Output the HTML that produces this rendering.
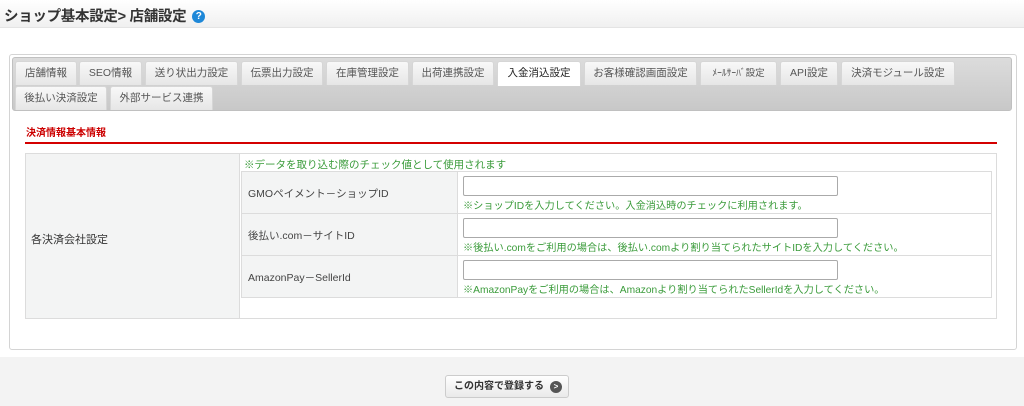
<!DOCTYPE html>
<html><head><meta charset="utf-8"><style>
*{box-sizing:border-box;margin:0;padding:0}
body{width:1024px;height:406px;background:#fff;font-family:"Liberation Sans","Noto Sans CJK JP",sans-serif;font-size:11px;color:#333;position:relative;overflow:hidden}
.hd{position:absolute;left:0;top:0;width:1024px;height:28px;background:linear-gradient(#fff,#f0f0f0);border-bottom:1px solid #e4e4e4}
.hd h1{position:absolute;left:4px;top:5px;font-size:14.5px;font-weight:bold;color:#333;letter-spacing:-0.3px}
.q{display:inline-block;width:13px;height:13px;border-radius:50%;background:#1e88d8;color:#fff;font-size:10px;text-align:center;line-height:13px;vertical-align:2px;margin-left:6px;letter-spacing:0}
.panel{position:absolute;left:9px;top:54px;width:1008px;height:296px;border:1px solid #d4d4d4;border-radius:3px;background:#fff}
.tabs{position:absolute;left:12px;top:57px;width:1000px;height:54px;background:linear-gradient(#dcdcdc,#c8c8c8);border-radius:3px;border:1px solid #c0c0c0}
.t{position:absolute;height:24px;background:linear-gradient(#f8f8f8,#e6e6e6);border:1px solid #d6d6d6;border-bottom:none;border-radius:3px 3px 0 0;font-size:10.5px;color:#555;text-align:center;line-height:23px}
.t.a{background:#fff;color:#222}
.sec{position:absolute;left:26px;top:124px;font-size:10px;font-weight:bold;color:#c00}
.red{position:absolute;left:25px;top:142px;width:972px;height:2px;background:#d40000}
.tbl{position:absolute;left:25px;top:153px;width:972px;height:166px;border:1px solid #dcdcdc}
.lc{position:absolute;left:0;top:0;width:214px;height:164px;background:#f3f4f4;border-right:1px solid #dcdcdc}
.lc span{position:absolute;left:5px;top:77px}
.note{position:absolute;left:244px;top:157px;color:#3a9b3a;font-size:10.5px}
.row{position:absolute;left:241px;width:751px;height:42px;border:1px solid #dcdcdc;border-top:none}
.row .l{position:absolute;left:0;top:0;width:216px;height:41px;background:#f3f4f4;border-right:1px solid #dcdcdc;padding:14px 0 0 6px;font-size:10.5px;color:#444}
.row input{position:absolute;left:221px;top:4px;width:375px;height:20px;border:1px solid #aaa;border-radius:2px}
.row .h{position:absolute;left:221px;top:25px;color:#3a9b3a;font-size:10.2px;white-space:nowrap}
.ft{position:absolute;left:0;top:357px;width:1024px;height:49px;background:#f3f3f3}
.btn{position:absolute;left:445px;top:375px;width:124px;height:23px;border:1px solid #ccc;border-radius:3px;background:linear-gradient(#fff,#eaeaea);font-size:10px;font-weight:bold;color:#333;line-height:21px;padding-left:8px}
.btn i{position:absolute;left:104px;top:5px;width:12px;height:12px;border-radius:50%;background:#555;color:#fff;font-style:normal;font-size:8px;line-height:12px;text-align:center}
</style></head><body>
<div class="hd"><h1>ショップ基本設定&gt; 店舗設定<span class="q">?</span></h1></div>
<div class="panel"></div>
<div class="tabs"></div>
<div class="t" style="left:15px;top:61px;width:62px">店舗情報</div>
<div class="t" style="left:79px;top:61px;width:63px">SEO情報</div>
<div class="t" style="left:145px;top:61px;width:93px">送り状出力設定</div>
<div class="t" style="left:241px;top:61px;width:82px">伝票出力設定</div>
<div class="t" style="left:326px;top:61px;width:83px">在庫管理設定</div>
<div class="t" style="left:412px;top:61px;width:82px">出荷連携設定</div>
<div class="t a" style="left:497px;top:61px;width:84px;height:25px">入金消込設定</div>
<div class="t" style="left:584px;top:61px;width:113px">お客様確認画面設定</div>
<div class="t" style="left:700px;top:61px;width:77px;font-size:9.5px">ﾒｰﾙｻｰﾊﾞ設定</div>
<div class="t" style="left:780px;top:61px;width:58px">API設定</div>
<div class="t" style="left:841px;top:61px;width:114px">決済モジュール設定</div>
<div class="t" style="left:15px;top:86px;width:92px">後払い決済設定</div>
<div class="t" style="left:110px;top:86px;width:103px">外部サービス連携</div>
<div class="sec">決済情報基本情報</div>
<div class="red"></div>
<div class="tbl"><div class="lc"><span>各決済会社設定</span></div></div>
<div class="note">※データを取り込む際のチェック値として使用されます</div>
<div class="row" style="top:171px;border-top:1px solid #dcdcdc;height:43px"><div class="l">GMOペイメント－ショップID</div><input><div class="h">※ショップIDを入力してください。入金消込時のチェックに利用されます。</div></div>
<div class="row" style="top:214px"><div class="l">後払い.com－サイトID</div><input><div class="h">※後払い.comをご利用の場合は、後払い.comより割り当てられたサイトIDを入力してください。</div></div>
<div class="row" style="top:256px"><div class="l">AmazonPay－SellerId</div><input><div class="h">※AmazonPayをご利用の場合は、Amazonより割り当てられたSellerIdを入力してください。</div></div>
<div class="ft"></div>
<div class="btn">この内容で登録する<i>&gt;</i></div>
</body></html>
